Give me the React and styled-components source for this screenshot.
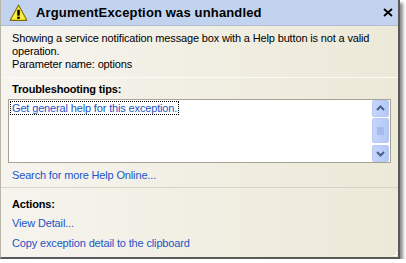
import React from 'react';
import styled, { createGlobalStyle } from 'styled-components';

const GlobalStyle = createGlobalStyle`
    html, body {
        margin: 0;
        padding: 0;
        background: #ffffff;
    }
    body {
        font-family: Tahoma, "Liberation Sans", Arial, sans-serif;
        font-size: 11px;
        letter-spacing: -0.15px;
    }
`;

const Window = styled.div`
    width: 400px;
    height: 259px;
    box-sizing: border-box;
    border-left: 1px solid #b9b6a8;
    border-right: 2px solid #5a5a5a;
    border-bottom: 2px solid #5a5a5a;
    box-shadow: 3px 3px 3px rgba(0,0,0,.45);
    background: linear-gradient(to right, #f6f4ee 0%, #ece9d8 100%);
    display: flex;
    flex-direction: column;
    position: relative;
`;

const TitleBar = styled.div`
    height: 25px;
    background: #c2d3ef;
    border-bottom: 1px solid #b0bdd4;
    display: flex;
    align-items: center;
    padding: 0 3px 0 8px;
    gap: 8px;
`;

const Title = styled.div`
    flex: 1;
    font-weight: bold;
    font-size: 13px;
    color: #000;
    letter-spacing: 0.15px;
`;

const Close = styled.div`
    width: 14px;
    display: flex;
    justify-content: center;
`;

const Message = styled.div`
    padding: 6px 10px 6px 11px;
    line-height: 13px;
    color: #000;
    border-bottom: 1px solid #fbfaf6;
`;

const Section = styled.div`
    padding: ${p => p.pad || '3px 7px 0 7px'};
    border-top: ${p => p.divided ? '1px solid #d8d5c8' : 'none'};
    display: flex;
    flex-direction: column;
`;

const Heading = styled.div`
    font-weight: bold;
    padding-left: 4px;
    height: 16px;
    line-height: 16px;
    color: #000;
`;

const TipsBox = styled.div`
    height: 62px;
    margin-top: 2px;
    border: 1px solid #a5a294;
    background: #fff;
    display: flex;
`;

const TipsList = styled.div`
    flex: 1;
    padding: 2px 2px;
`;

const Focused = styled.span`
    outline: 1px dotted #000;
    outline-offset: 0;
    color: #2255c6;
    padding: 0 1px;
    line-height: 13px;
`;

const ScrollBar = styled.div`
    width: 17px;
    display: flex;
    flex-direction: column;
    gap: 1px;
    padding: 0 1px 0 0;
`;

const ScrollBtn = styled.div`
    height: ${p => p.h}px;
    box-sizing: border-box;
    border: 1px solid #b8c8f0;
    border-radius: 2px;
    background: linear-gradient(to right, #c6d5fb, #b4c8f8);
    display: flex;
    align-items: center;
    justify-content: center;
    margin-top: ${p => p.mt || 0}px;
`;

const Link = styled.div`
    color: #2255c6;
    padding-left: 4px;
    margin-top: ${p => p.mt || 0}px;
    height: ${p => p.h || 18}px;
    line-height: ${p => p.h || 18}px;
`;

const Grip = styled.div`
    position: absolute;
    right: 1px;
    bottom: 1px;
    width: 3px;
    height: 3px;
    border-right: 1px solid #fff;
    border-bottom: 1px solid #fff;
`;

function Warning() {
    return (
        <svg width="19" height="18" viewBox="0 0 18 17">
            <path d="M9 1 L17 15.5 L1 15.5 Z" fill="#f8e21c" stroke="#7a6a14" strokeWidth="1" strokeLinejoin="round" />
            <path d="M9 3 L15.5 14.5 L2.5 14.5 Z" fill="#fbed3c" />
            <rect x="7.8" y="5.5" width="2.4" height="5.5" fill="#000" />
            <rect x="7.8" y="12" width="2.4" height="2" fill="#000" />
        </svg>
    );
}

function Arrow({ up }) {
    return (
        <svg width="9" height="6" viewBox="0 0 9 6">
            <path d={up ? "M1 5 L4.5 1.5 L8 5" : "M1 1 L4.5 4.5 L8 1"} fill="none" stroke="#4d6185" strokeWidth="2" />
        </svg>
    );
}

export default function App() {
    return (
        <>
            <GlobalStyle />
            <Window>
                <TitleBar>
                    <Warning />
                    <Title>ArgumentException was unhandled</Title>
                    <Close>
                        <svg width="10" height="9" viewBox="0 0 10 9">
                            <path d="M1 1 L9 8 M9 1 L1 8" stroke="#000" strokeWidth="1.8" />
                        </svg>
                    </Close>
                </TitleBar>
                <Message>
                    Showing a service notification message box with a Help button is not a valid operation.<br />
                    Parameter name: options
                </Message>
                <Section>
                    <Heading>Troubleshooting tips:</Heading>
                    <TipsBox>
                        <TipsList>
                            <Focused>Get general help for this exception.</Focused>
                        </TipsList>
                        <ScrollBar>
                            <ScrollBtn h={17}><Arrow up /></ScrollBtn>
                            <ScrollBtn h={26}>
                                <svg width="7" height="8" viewBox="0 0 7 8">
                                    <path d="M0 1h7M0 3h7M0 5h7M0 7h7" stroke="#8ea6e8" strokeWidth="1" />
                                </svg>
                            </ScrollBtn>
                            <ScrollBtn h={17} mt={1}><Arrow /></ScrollBtn>
                        </ScrollBar>
                    </TipsBox>
                    <Link h={24}>Search for more Help Online...</Link>
                </Section>
                <Section divided pad="8px 7px 0 7px">
                    <Heading>Actions:</Heading>
                    <Link h={21} mt={1}>View Detail...</Link>
                    <Link h={18}>Copy exception detail to the clipboard</Link>
                </Section>
                <Grip />
            </Window>
        </>
    );
}
